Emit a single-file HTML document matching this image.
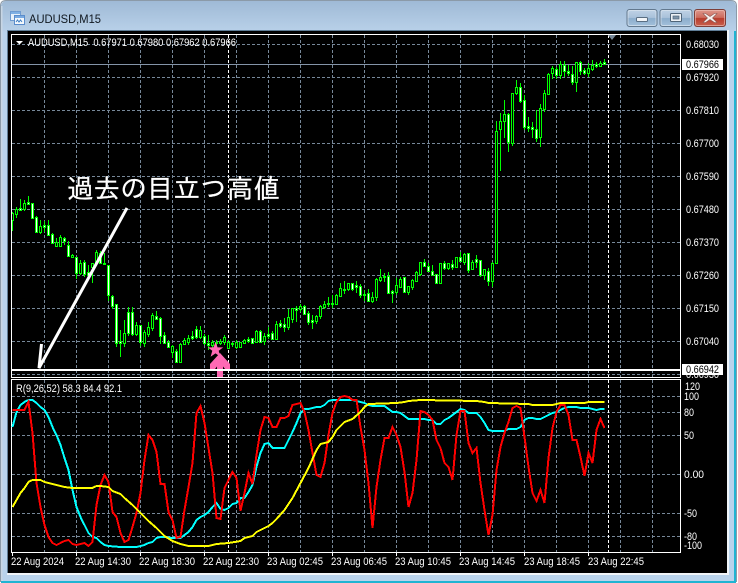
<!DOCTYPE html>
<html><head><meta charset="utf-8"><style>
html,body{margin:0;padding:0;background:#fff}
body{width:738px;height:583px;overflow:hidden;position:relative}
svg{position:absolute;left:0;top:0}
text{font-family:"Liberation Sans",sans-serif;fill:#fff;font-size:11px}
</style></head><body>
<svg width="738" height="583" viewBox="0 0 738 583" xmlns="http://www.w3.org/2000/svg">
<defs>
<linearGradient id="tb" x1="0" y1="0" x2="0" y2="1"><stop offset="0" stop-color="#9fbad6"/><stop offset="1" stop-color="#b9d1e9"/></linearGradient>
<linearGradient id="bt" x1="0" y1="0" x2="0" y2="1"><stop offset="0" stop-color="#c0d3e6"/><stop offset=".48" stop-color="#a9c1da"/><stop offset=".52" stop-color="#8cadcc"/><stop offset="1" stop-color="#a4c1dc"/></linearGradient>
<linearGradient id="cl" x1="0" y1="0" x2="0" y2="1"><stop offset="0" stop-color="#df9a8e"/><stop offset=".48" stop-color="#cc6a5c"/><stop offset=".52" stop-color="#b83c2c"/><stop offset="1" stop-color="#c9614f"/></linearGradient>
</defs>
<!-- window -->
<rect x="1" y="0.5" width="735" height="582" rx="6" fill="#b9d3ec"/>
<rect x="1" y="1" width="735" height="31" rx="5" fill="url(#tb)"/>
<path d="M.5 582V6Q.5 .5 6 .5H731Q736.5 .5 736.5 6V582" fill="none" stroke="#8b9aa8" stroke-width="1"/>
<rect x="1" y="581" width="735" height="2" fill="#1fb4d2"/>
<rect x="734" y="31" width="2" height="551" fill="#1fb4d2"/>
<rect x="1" y="6" width="1.5" height="575" fill="#c8d6e4"/>
<rect x="7" y="30" width="722" height="545" fill="#f0f4f8"/>
<rect x="8" y="31" width="719" height="542" fill="#000"/>
<rect x="7" y="30" width="720" height="1" fill="#5f7d96"/>
<rect x="7" y="30" width="1" height="543" fill="#5f7d96"/>
<!-- icon -->
<g shape-rendering="crispEdges">
<rect x="10.5" y="11.5" width="10" height="9" fill="#e8f1fa" stroke="#6f9bd0"/>
<rect x="11" y="12" width="9" height="2" fill="#7fb0e4"/>
<rect x="14.5" y="15.5" width="10" height="9" fill="#f4f8fc" stroke="#5a8ccb"/>
<rect x="15" y="16" width="9" height="2" fill="#78aae2"/>
</g>
<path d="M16 22l1.5-2 1.5 2 1.5-2 1.5 2" fill="none" stroke="#3f7fc4" stroke-width="1"/>
<!-- title -->
<text x="29" y="23" style="font-size:12px;fill:#101820" textLength="72" lengthAdjust="spacingAndGlyphs">AUDUSD,M15</text>
<!-- buttons -->
<rect x="627" y="9.5" width="30" height="17" rx="2.5" fill="url(#bt)" stroke="#62788e"/>
<rect x="628" y="10.5" width="28" height="15" rx="2" fill="none" stroke="#dbe6f0" stroke-opacity=".7"/>
<rect x="636.5" y="17.5" width="11" height="4" rx="1" fill="#f2f5f8" stroke="#5a6e82"/>
<rect x="660" y="9.5" width="32" height="17" rx="2.5" fill="url(#bt)" stroke="#62788e"/>
<rect x="661" y="10.5" width="30" height="15" rx="2" fill="none" stroke="#dbe6f0" stroke-opacity=".7"/>
<rect x="670.5" y="13.5" width="11" height="8" rx="1" fill="#eef2f6" stroke="#4f6478"/>
<rect x="673" y="16" width="6" height="3" fill="#7f95aa" stroke="#4f6478" stroke-width=".7"/>
<rect x="694.5" y="9.5" width="31" height="17" rx="2.5" fill="url(#cl)" stroke="#7d3e38"/>
<rect x="695.5" y="10.5" width="29" height="15" rx="2" fill="none" stroke="#f0c4bc" stroke-opacity=".6"/>
<path d="M705.5 13.5l4.5 3 4.5-3h2.5l-4.5 4.5 4.5 4.5h-2.5l-4.5-3-4.5 3h-2.5l4.5-4.5-4.5-4.5z" fill="#f6f0ee" stroke="#8a5a54" stroke-width=".6"/>

<g shape-rendering="crispEdges" fill="none">
<!-- grid -->
<path stroke="#778899" stroke-dasharray="3 2" d="M12 44.5H680M12 77.5H680M12 110.5H680M12 143.5H680M12 176.5H680M12 209.5H680M12 242.5H680M12 275.5H680M12 308.5H680M12 341.5H680M12 374.5H680M12 396.5H680M12 412.5H680M12 435.5H680M12 474.5H680M12 513.5H680M12 536.5H680"/>
<path stroke="#778899" stroke-dasharray="3 2" d="M44.5 35V377M76.5 35V377M108.5 35V377M140.5 35V377M172.5 35V377M204.5 35V377M236.5 35V377M268.5 35V377M300.5 35V377M332.5 35V377M364.5 35V377M396.5 35V377M428.5 35V377M460.5 35V377M492.5 35V377M524.5 35V377M556.5 35V377M588.5 35V377M620.5 35V377M652.5 35V377"/>
<path stroke="#778899" stroke-dasharray="3 2" d="M44.5 380V552M76.5 380V552M108.5 380V552M140.5 380V552M172.5 380V552M204.5 380V552M236.5 380V552M268.5 380V552M300.5 380V552M332.5 380V552M364.5 380V552M396.5 380V552M428.5 380V552M460.5 380V552M492.5 380V552M524.5 380V552M556.5 380V552M588.5 380V552M620.5 380V552M652.5 380V552"/>
<path stroke="#ffffff" stroke-dasharray="3 2" d="M228.5 35V377M608.5 35V377M228.5 380V552M608.5 380V552"/>
<path stroke="#8494a8" d="M12 64.5H681"/>
<!-- wicks -->
<path stroke="#00ff00" d="M12.5 212V231M16.5 207V218M20.5 199V211M24.5 200V211M28.5 196V205M32.5 203V218M36.5 216V232M40.5 220V234M44.5 221V232M48.5 220V236M52.5 233V244M56.5 238V247M60.5 235V247M64.5 237V245M68.5 241V257M72.5 254V258M76.5 257V279M80.5 260V275M84.5 260V277M88.5 265V280M92.5 263V283M96.5 250V264M100.5 251V264M104.5 253V264M108.5 265V301M112.5 295V309M116.5 304V347M120.5 330V357M124.5 320V347M128.5 307V336M132.5 307V336M136.5 322V336M140.5 325V346M144.5 330V347M148.5 322V337M152.5 313V331M156.5 311V320M160.5 317V344M164.5 332V344M168.5 340V347M172.5 345V358M176.5 349V363M180.5 343V363M184.5 338V345M188.5 335V345M192.5 331V340M196.5 326V339M200.5 326V339M204.5 334V345M208.5 335V350M212.5 340V348M216.5 340V346M220.5 339V345M224.5 335V345M228.5 340V349M232.5 342V347M236.5 340V349M240.5 342V348M244.5 339V344M248.5 337V343M252.5 338V344M256.5 330V343M260.5 330V343M264.5 333V345M268.5 327V339M272.5 331V340M276.5 321V340M280.5 320V328M284.5 318V332M288.5 309V330M292.5 308V323M296.5 306V322M300.5 304V312M304.5 305V315M308.5 311V325M312.5 315V329M316.5 315V324M320.5 305V319M324.5 301V309M328.5 297V307M332.5 295V308M336.5 294V304M340.5 283V296M344.5 281V294M348.5 283V291M352.5 283V291M356.5 281V293M360.5 284V298M364.5 290V301M368.5 289V301M372.5 292V303M376.5 278V301M380.5 269V282M384.5 273V282M388.5 272V293M392.5 290V303M396.5 278V295M400.5 277V287M404.5 277V292M408.5 286V295M412.5 279V290M416.5 271V281M420.5 262V276M424.5 259V266M428.5 263V272M432.5 265V276M436.5 274V283M440.5 263V283M444.5 261V270M448.5 263V270M452.5 260V270M456.5 257V268M460.5 252V262M464.5 253V265M468.5 253V273M472.5 260V270M476.5 255V268M480.5 260V277M484.5 269V280M488.5 268V286M492.5 262V287M496.5 121V263M500.5 113V171M504.5 100V138M508.5 113V152M512.5 93V146M516.5 80V95M520.5 83V103M524.5 95V130M528.5 117V132M532.5 122V138M536.5 110V142M540.5 104V147M544.5 90V112M548.5 73V95M552.5 66V79M556.5 67V79M560.5 61V79M564.5 61V77M568.5 65V76M572.5 66V85M576.5 62V92M580.5 61V75M584.5 68V75M588.5 63V77M592.5 60V71M596.5 62V68M600.5 61V67M604.5 59V65"/>
<!-- hollow bodies -->
<path stroke="#00ff00" fill="#000" d="M11.5 213.5h2V220.5h-2zM15.5 209.5h2V214.5h-2zM23.5 203.5h2V209.5h-2zM39.5 226.5h2V232.5h-2zM55.5 242.5h2V246.5h-2zM59.5 237.5h2V246.5h-2zM71.5 255.5h2V257.5h-2zM79.5 263.5h2V273.5h-2zM91.5 263.5h2V267.5h-2zM95.5 252.5h2V262.5h-2zM123.5 333.5h2V343.5h-2zM135.5 325.5h2V334.5h-2zM143.5 332.5h2V343.5h-2zM147.5 327.5h2V334.5h-2zM151.5 315.5h2V328.5h-2zM171.5 346.5h2V352.5h-2zM179.5 344.5h2V362.5h-2zM183.5 340.5h2V344.5h-2zM187.5 338.5h2V342.5h-2zM199.5 330.5h2V337.5h-2zM211.5 342.5h2V345.5h-2zM219.5 341.5h2V343.5h-2zM223.5 337.5h2V342.5h-2zM227.5 342.5h2V348.5h-2zM235.5 342.5h2V347.5h-2zM239.5 342.5h2V347.5h-2zM243.5 340.5h2V343.5h-2zM255.5 331.5h2V342.5h-2zM263.5 336.5h2V341.5h-2zM275.5 324.5h2V339.5h-2zM287.5 317.5h2V327.5h-2zM291.5 308.5h2V319.5h-2zM299.5 306.5h2V309.5h-2zM315.5 316.5h2V321.5h-2zM319.5 306.5h2V316.5h-2zM323.5 304.5h2V307.5h-2zM335.5 295.5h2V304.5h-2zM339.5 288.5h2V296.5h-2zM347.5 283.5h2V289.5h-2zM371.5 297.5h2V301.5h-2zM375.5 279.5h2V297.5h-2zM379.5 277.5h2V280.5h-2zM395.5 285.5h2V292.5h-2zM399.5 279.5h2V287.5h-2zM407.5 286.5h2V292.5h-2zM411.5 280.5h2V287.5h-2zM415.5 272.5h2V281.5h-2zM419.5 262.5h2V274.5h-2zM439.5 263.5h2V283.5h-2zM447.5 263.5h2V268.5h-2zM455.5 257.5h2V267.5h-2zM463.5 254.5h2V262.5h-2zM471.5 262.5h2V269.5h-2zM483.5 269.5h2V275.5h-2zM491.5 263.5h2V281.5h-2zM495.5 131.5h2V263.5h-2zM499.5 121.5h2V129.5h-2zM503.5 114.5h2V121.5h-2zM511.5 93.5h2V143.5h-2zM515.5 87.5h2V93.5h-2zM539.5 108.5h2V137.5h-2zM543.5 93.5h2V109.5h-2zM547.5 74.5h2V94.5h-2zM551.5 68.5h2V73.5h-2zM559.5 64.5h2V75.5h-2zM575.5 62.5h2V82.5h-2zM587.5 68.5h2V73.5h-2zM591.5 65.5h2V69.5h-2zM599.5 63.5h2V66.5h-2z"/>
<!-- filled bodies -->
<path stroke="#00ff00" fill="#fff" d="M19.5 208.5h2V210.5h-2zM27.5 202.5h2V204.5h-2zM31.5 203.5h2V218.5h-2zM35.5 217.5h2V232.5h-2zM43.5 225.5h2V227.5h-2zM47.5 225.5h2V235.5h-2zM51.5 234.5h2V243.5h-2zM63.5 238.5h2V241.5h-2zM67.5 245.5h2V256.5h-2zM75.5 257.5h2V273.5h-2zM83.5 262.5h2V274.5h-2zM87.5 272.5h2V275.5h-2zM99.5 253.5h2V263.5h-2zM103.5 263.5h2V264.5h-2zM107.5 265.5h2V295.5h-2zM111.5 296.5h2V306.5h-2zM115.5 304.5h2V343.5h-2zM119.5 341.5h2V343.5h-2zM127.5 312.5h2V333.5h-2zM131.5 312.5h2V334.5h-2zM139.5 325.5h2V342.5h-2zM155.5 316.5h2V319.5h-2zM159.5 318.5h2V336.5h-2zM163.5 335.5h2V343.5h-2zM167.5 342.5h2V347.5h-2zM175.5 351.5h2V362.5h-2zM191.5 336.5h2V338.5h-2zM195.5 329.5h2V337.5h-2zM203.5 336.5h2V343.5h-2zM207.5 343.5h2V345.5h-2zM215.5 342.5h2V343.5h-2zM231.5 343.5h2V344.5h-2zM247.5 339.5h2V341.5h-2zM251.5 338.5h2V343.5h-2zM259.5 331.5h2V342.5h-2zM267.5 334.5h2V336.5h-2zM271.5 333.5h2V339.5h-2zM279.5 323.5h2V326.5h-2zM283.5 324.5h2V327.5h-2zM295.5 308.5h2V310.5h-2zM303.5 306.5h2V314.5h-2zM307.5 313.5h2V322.5h-2zM311.5 320.5h2V322.5h-2zM327.5 303.5h2V304.5h-2zM331.5 303.5h2V304.5h-2zM343.5 289.5h2V290.5h-2zM351.5 283.5h2V289.5h-2zM355.5 285.5h2V287.5h-2zM359.5 286.5h2V295.5h-2zM363.5 294.5h2V295.5h-2zM367.5 293.5h2V301.5h-2zM383.5 276.5h2V277.5h-2zM387.5 276.5h2V293.5h-2zM391.5 291.5h2V293.5h-2zM403.5 277.5h2V292.5h-2zM423.5 262.5h2V266.5h-2zM427.5 266.5h2V271.5h-2zM431.5 271.5h2V275.5h-2zM435.5 274.5h2V283.5h-2zM443.5 263.5h2V268.5h-2zM451.5 264.5h2V267.5h-2zM459.5 257.5h2V261.5h-2zM467.5 253.5h2V270.5h-2zM475.5 259.5h2V262.5h-2zM479.5 260.5h2V275.5h-2zM487.5 271.5h2V281.5h-2zM507.5 114.5h2V142.5h-2zM519.5 87.5h2V101.5h-2zM523.5 100.5h2V127.5h-2zM527.5 126.5h2V128.5h-2zM531.5 127.5h2V129.5h-2zM535.5 129.5h2V138.5h-2zM555.5 69.5h2V75.5h-2zM563.5 65.5h2V71.5h-2zM567.5 71.5h2V73.5h-2zM571.5 74.5h2V82.5h-2zM579.5 62.5h2V71.5h-2zM583.5 70.5h2V73.5h-2zM595.5 64.5h2V66.5h-2zM603.5 62.5h2V64.5h-2z"/>
<!-- pink arrow and star -->
<path shape-rendering="auto" d="M215.5 342L217.6 347.4H223.2L218.7 350.8L220.4 356.8L215.5 353.4L210.6 356.8L212.3 350.8L207.8 347.4H213.4z" fill="#ff69b4"/>
<path shape-rendering="auto" d="M220 353L230 364V369H225L223 366.5V377H217V366.5L215 369H210V364z" fill="#ff69b4"/>
<!-- frames -->
<rect x="11.5" y="34.5" width="669" height="343" stroke="#fff"/>
<rect x="11.5" y="379.5" width="669" height="173" stroke="#fff"/>
<rect x="12" y="369" width="668" height="2" fill="#fff"/>
<!-- indicator lines -->
<g transform="translate(.5 0)" stroke-width="2">
<polyline stroke="#00ffff" points="12,427 16,412 20,405 24,402 28,400 32,400 36,403 40,407 44,410 48,417 52,427 56,435 60,445 64,458 68,470 72,490 76,507 80,517 84,525 88,533 92,537 96,538 100,542 104,545 108,546 120,547 136,547 140,546 144,545 148,543 152,542 156,538 160,537 164,537 172,538 176,538 180,538 184,535 188,532 192,527 196,520 200,517 204,515 208,512 212,507 216,503 220,509 224,510 228,508 232,504 236,503 240,498 244,498 248,492 252,485 256,467 260,453 264,444 268,443 272,448 276,448 280,448 284,448 288,440 292,432 296,423 300,413 304,409 308,409 312,408 316,407 320,407 324,405 328,401 332,400 352,400 356,401 360,402 364,403 368,405 372,406 384,406 388,409 392,412 396,412 400,413 404,416 408,419 424,419 428,420 432,420 436,424 440,424 444,420 448,418 452,415 456,412 460,409 464,410 468,413 472,413 476,413 480,417 484,423 488,430 492,431 504,431 508,429 516,429 520,427 524,420 528,418 532,418 536,419 540,419 544,417 548,415 552,413 556,412 560,410 564,408 568,407 576,407 580,408 588,408 592,409 596,410 600,409 604,409"/>
<polyline stroke="#ff0000" points="12,410 24,410 28,402 32,433 36,483 40,507 44,525 48,537 52,543 56,545 60,543 64,541 68,540 72,544 76,545 80,544 84,543 88,546 92,542 96,505 100,485 104,475 108,482 112,512 116,517 120,533 124,542 128,540 132,527 136,513 140,493 144,460 148,435 152,440 156,452 160,484 164,484 168,512 172,520 176,538 180,537 184,510 188,487 192,463 196,413 200,406 204,423 208,448 212,473 216,518 220,519 224,488 228,480 232,472 236,478 240,511 244,493 248,473 252,484 256,455 260,430 264,417 268,418 272,427 276,427 280,418 284,418 288,416 292,405 296,404 300,403 304,412 308,430 312,453 316,475 320,477 324,463 328,435 332,413 336,402 340,397 344,396 348,397 352,400 356,400 360,427 364,450 368,483 372,528 376,487 380,460 384,438 388,438 392,427 396,435 400,447 404,472 408,507 412,493 416,460 420,411 424,412 428,415 432,420 436,440 440,448 444,463 448,467 452,480 456,435 460,411 464,411 468,443 472,453 476,448 480,483 484,510 488,535 492,515 496,470 500,447 504,433 508,422 512,408 516,406 520,408 524,437 528,467 532,493 536,501 540,490 544,503 548,458 552,428 556,412 560,405 564,405 568,415 572,440 576,440 580,457 584,476 588,453 592,463 596,430 600,419 604,428"/>
<polyline stroke="#ffff00" points="12,507 16,500 20,493 24,488 28,482 32,480 40,480 44,482 48,483 52,484 56,485 64,487 72,488 92,488 96,486 100,486 108,487 112,491 120,494 124,498 132,505 140,513 148,521 156,528 164,536 172,541 180,544 188,546 208,546 216,544 228,543 240,541 244,538 252,536 256,532 268,526 272,523 276,519 284,510 292,498 300,483 308,468 316,450 320,444 328,442 332,437 336,430 344,422 352,419 360,412 364,407 368,404 396,403 404,402 408,401 420,400 476,401 484,402 488,403 528,404 532,405 552,405 556,404 560,403 584,403 588,402 604,402"/>
</g>
</g>
<!-- chart header -->
<path d="M16 41h7l-3.5 3.5z" fill="#fff"/>
<text x="28" y="46" textLength="208" lengthAdjust="spacingAndGlyphs" xml:space="preserve">AUDUSD,M15  0.67971 0.67980 0.67962 0.67966</text>
<path d="M608 35h8l-4 5z" fill="#778899"/>
<!-- annotation -->
<text x="67" y="198" textLength="213" stroke="#fff" stroke-width=".25" style="font-family:'IPAGothic','Noto Sans CJK JP',sans-serif;font-size:26.5px">過去の目立つ高値</text>
<!-- arrow -->
<path d="M127 208L39 368L41.5 344" fill="none" stroke="#fff" stroke-width="3"/>
<!-- price labels -->
<g>
<text x="686" y="48" textLength="33" lengthAdjust="spacingAndGlyphs">0.68030</text>
<rect x="682" y="59" width="41" height="11" fill="#fff"/>
<text x="686" y="68" textLength="33" lengthAdjust="spacingAndGlyphs" style="fill:#000">0.67966</text>
<text x="686" y="81" textLength="33" lengthAdjust="spacingAndGlyphs">0.67920</text>
<text x="686" y="114" textLength="33" lengthAdjust="spacingAndGlyphs">0.67810</text>
<text x="686" y="147" textLength="33" lengthAdjust="spacingAndGlyphs">0.67700</text>
<text x="686" y="180" textLength="33" lengthAdjust="spacingAndGlyphs">0.67590</text>
<text x="686" y="213" textLength="33" lengthAdjust="spacingAndGlyphs">0.67480</text>
<text x="686" y="246" textLength="33" lengthAdjust="spacingAndGlyphs">0.67370</text>
<text x="686" y="279" textLength="33" lengthAdjust="spacingAndGlyphs">0.67260</text>
<text x="686" y="312" textLength="33" lengthAdjust="spacingAndGlyphs">0.67150</text>
<text x="686" y="345" textLength="33" lengthAdjust="spacingAndGlyphs">0.67040</text>
<text x="686" y="378" textLength="33" lengthAdjust="spacingAndGlyphs">0.66930</text>
<rect x="682" y="364" width="41" height="11" fill="#fff"/>
<text x="686" y="373" textLength="33" lengthAdjust="spacingAndGlyphs" style="fill:#000">0.66942</text>
<text x="685" y="390" textLength="15" lengthAdjust="spacingAndGlyphs">120</text>
<text x="684" y="400" textLength="15" lengthAdjust="spacingAndGlyphs">100</text>
<text x="684" y="416" textLength="10" lengthAdjust="spacingAndGlyphs">80</text>
<text x="684" y="439" textLength="10" lengthAdjust="spacingAndGlyphs">50</text>
<text x="684" y="478" textLength="20" lengthAdjust="spacingAndGlyphs">0.00</text>
<text x="684" y="517" textLength="13" lengthAdjust="spacingAndGlyphs">-50</text>
<text x="684" y="540" textLength="13" lengthAdjust="spacingAndGlyphs">-80</text>
<text x="684" y="549" textLength="18" lengthAdjust="spacingAndGlyphs">-100</text>
</g>
<text x="16" y="392" textLength="106" lengthAdjust="spacingAndGlyphs">R(9,26,52) 58.3 84.4 92.1</text>
<!-- time axis -->
<path d="M12.5 552V556M76.5 552V556M140.5 552V556M204.5 552V556M268.5 552V556M332.5 552V556M396.5 552V556M460.5 552V556M524.5 552V556M588.5 552V556" stroke="#fff" shape-rendering="crispEdges"/>
<g>
<text x="11" y="565" textLength="53" lengthAdjust="spacingAndGlyphs">22 Aug 2024</text>
<text x="75" y="565" textLength="56" lengthAdjust="spacingAndGlyphs">22 Aug 14:30</text>
<text x="139" y="565" textLength="56" lengthAdjust="spacingAndGlyphs">22 Aug 18:30</text>
<text x="203" y="565" textLength="56" lengthAdjust="spacingAndGlyphs">22 Aug 22:30</text>
<text x="267" y="565" textLength="56" lengthAdjust="spacingAndGlyphs">23 Aug 02:45</text>
<text x="331" y="565" textLength="56" lengthAdjust="spacingAndGlyphs">23 Aug 06:45</text>
<text x="395" y="565" textLength="56" lengthAdjust="spacingAndGlyphs">23 Aug 10:45</text>
<text x="459" y="565" textLength="56" lengthAdjust="spacingAndGlyphs">23 Aug 14:45</text>
<text x="524" y="565" textLength="56" lengthAdjust="spacingAndGlyphs">23 Aug 18:45</text>
<text x="588" y="565" textLength="56" lengthAdjust="spacingAndGlyphs">23 Aug 22:45</text>
</g>
</svg>
</body></html>
